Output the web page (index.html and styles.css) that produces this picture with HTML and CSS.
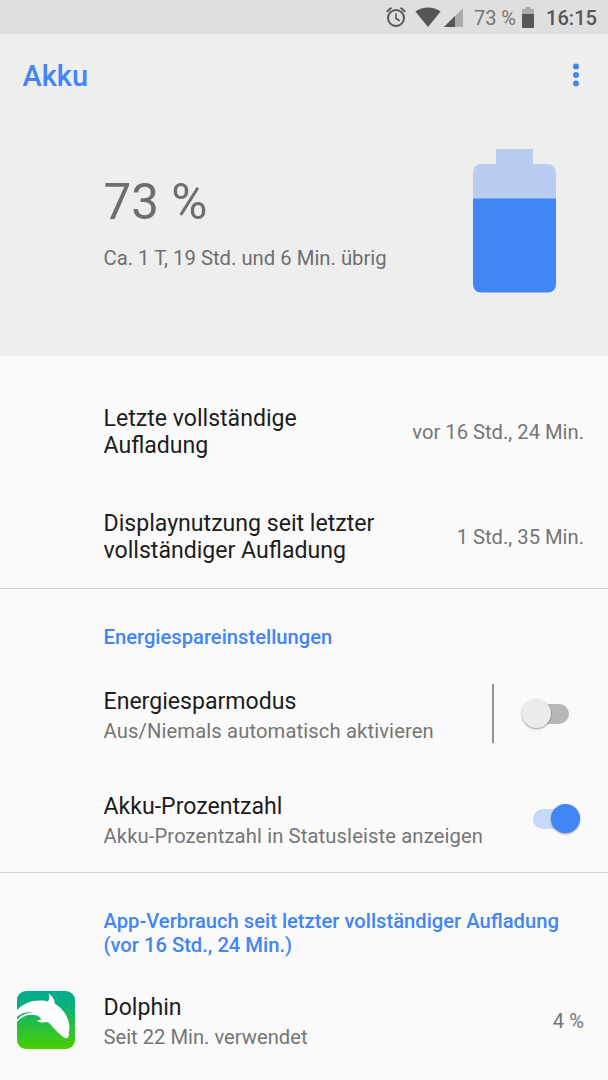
FILE: index.html
```html
<!DOCTYPE html>
<html lang="de">

<head>
  <meta charset="UTF-8">
  <meta name="viewport" content="width=device-width, initial-scale=1.0">
  <title>Akku</title>
  <link rel="stylesheet" href="styles.css">
</head>

<body>
  <div class="status-bar">
    <svg class="alarm" width="20" height="22" viewBox="0 0 20 22" fill="none" stroke="#565656">
      <circle cx="10" cy="12" r="8" stroke-width="2" />
      <path d="M10 7.3v5.2l3.6 2.2" stroke-width="1.6" />
      <path d="M.7 5.7L5.4 1.8M19.3 5.7L14.6 1.8" stroke-width="2" />
    </svg>
    <svg class="wifi" width="26" height="20" viewBox="0 0 26 20">
      <path d="M.4 4.6C7.6-1 18.400-1 25.600 4.600L13 20z" fill="#565656" />
    </svg>
    <svg class="signal" width="19" height="19" viewBox="0 0 19 19">
      <path d="M0 19L19 0v19z" fill="#ababab" />
      <path d="M0 19L11 8v11z" fill="#565656" />
    </svg>
    <span class="percent">73 %</span>
    <svg class="cell" width="12" height="21" viewBox="0 0 12 21">
      <path d="M3.500 0h5v2H12v6H0V2h3.500z" fill="#ababab" />
      <path d="M0 7h12v13a1 1 0 0 1-1 1H1a1 1 0 0 1-1-1z" fill="#565656" />
    </svg>
    <span class="clock">16:15</span>
  </div>

  <header class="header">
    <div class="toolbar">
      <h1>Akku</h1>
      <svg width="6" height="24" viewBox="0 0 6 24" fill="#4285f4">
        <circle cx="3" cy="3.500" r="3" />
        <circle cx="3" cy="12" r="3" />
        <circle cx="3" cy="20.500" r="3" />
      </svg>
    </div>
    <div class="summary">
      <div>
        <div class="level">73 %</div>
        <div class="remaining">Ca. 1 T, 19 Std. und 6 Min. übrig</div>
      </div>
      <svg class="battery" width="83" height="144" viewBox="0 0 83 144">
        <path d="M23 0h37v15h15a8 8 0 0 1 8 8v27H0V23a8 8 0 0 1 8-8h15z" fill="#b9cdf0" />
        <path d="M0 49.500h83V135.500a8 8 0 0 1-8 8H8a8 8 0 0 1-8-8z" fill="#4285f4" />
      </svg>
    </div>
  </header>

  <section class="group first">
    <div class="row">
      <div class="title">Letzte vollständige<br>Aufladung</div>
      <div class="value">vor 16 Std., 24 Min.</div>
    </div>
    <div class="row">
      <div class="title">Displaynutzung seit letzter<br>vollständiger Aufladung</div>
      <div class="value">1 Std., 35 Min.</div>
    </div>
  </section>

  <section class="group saver">
    <h2>Energiespareinstellungen</h2>
    <div class="row">
      <div class="text">
        <div class="title">Energiesparmodus</div>
        <div class="sub wide">Aus/Niemals automatisch aktivieren</div>
      </div>
      <div class="switch-box">
        <div class="switch"><span class="thumb"></span></div>
      </div>
    </div>
    <div class="row">
      <div class="text">
        <div class="title">Akku-Prozentzahl</div>
        <div class="sub wide">Akku-Prozentzahl in Statusleiste anzeigen</div>
      </div>
      <div class="switch on"><span class="thumb"></span></div>
    </div>
  </section>

  <section class="group apps">
    <h2>App-Verbrauch seit letzter vollständiger Aufladung<br>(vor 16 Std., 24 Min.)</h2>
    <div class="row app">
      <svg class="app-icon" width="58" height="58" viewBox="0 0 58 58">
        <defs>
          <linearGradient id="sea" x1="0" y1="0" x2="0" y2="1">
            <stop offset="0" stop-color="#00ab91" />
            <stop offset=".25" stop-color="#08b07c" />
            <stop offset=".6" stop-color="#28bf3d" />
            <stop offset="1" stop-color="#48cf00" />
          </linearGradient>
        </defs>
        <rect width="58" height="58" rx="9" fill="url(#sea)" />
        <path d="M0 19C7 12 15 9 24 9.500c3 0 5 .7 7 .9C32.500 8 32.500 5.500 31.500 2.500c4 2.500 6 5.500 6.300 10C45 17.500 50.500 24 52 32c.7 4 .5 6.500-.3 9.500.4 2.500 0 4.500-1.200 5.500-2.500.8-4.500-.8-6.500-2.700-5-4.300-8.500-8.800-12.500-12.800-4-.5-9 .8-11.500-1.800l4.500-1.200c-1-1.500-2-3-4.500-4C12.500 22.500 6 24.500 0 31v-2.500c4-4 9-6.800 15.500-6.700C10 20.500 4 22 0 26z" fill="#fff" />
      </svg>
      <div class="text">
        <div class="title">Dolphin</div>
        <div class="sub">Seit 22 Min. verwendet</div>
      </div>
      <div class="value">4 %</div>
    </div>
  </section>
</body>

</html>
```
FILE: styles.css
```css
* {
  box-sizing: border-box;
}

body {
  margin: 0;
  height: 1080px;
  overflow: hidden;
  font-family: Roboto, sans-serif;
  background-color: #fafafa;
  color: #1d1d1d;
}

svg {
  display: block;
  flex: none;
}

.status-bar {
  display: flex;
  align-items: center;
  justify-content: flex-end;
  height: 34px;
  padding-right: 11px;
  background-color: #dfdfdf;
  color: #565656;
  font-size: 20px;
  line-height: 34px;
}

.wifi {
  margin-left: 9px;
}

.signal {
  margin-left: 3px;
}

.percent {
  margin-left: 11px;
  padding-top: 2px;
  color: #757575;
}

.cell {
  margin-left: 6px;
}

.clock {
  margin-left: 12px;
  padding-top: 2px;
  font-size: 20.1px;
  font-weight: 500;
}

.header {
  height: 322px;
  background-color: #eee;
}

.toolbar {
  display: flex;
  align-items: center;
  justify-content: space-between;
  height: 81px;
  padding: 0 29px 0 22.5px;
}

h1 {
  margin: 2px 0 0;
  font-size: 29px;
  font-weight: 500;
  line-height: 34px;
  color: #4285f4;
}

.summary {
  display: flex;
  justify-content: space-between;
  padding: 34px 52px 0 103.5px;
  color: #6e6e6e;
}

.level {
  margin-top: 24px;
  font-size: 49.3px;
  line-height: 58px;
}

.remaining {
  margin-top: 15px;
  font-size: 20.3px;
  line-height: 24px;
}

.group + .group {
  border-top: 1px solid #d5d5d5;
}

.first {
  padding-top: 22px;
}

.saver {
  padding-bottom: 1px;
}

.row {
  display: flex;
  align-items: center;
  justify-content: space-between;
  height: 105px;
  padding: 0 24px 0 103.5px;
}

.first .title {
  padding-top: 3px;
}

.text {
  padding-top: 3px;
}

.title {
  font-size: 23.1px;
  line-height: 27px;
}

.sub {
  margin-top: 4px;
  font-size: 20.2px;
  line-height: 24px;
  color: #757575;
}

.wide {
  letter-spacing: 0.13px;
}

.value {
  padding-top: 2px;
  font-size: 20.2px;
  line-height: 24px;
  white-space: nowrap;
  color: #757575;
}

h2 {
  margin: 0;
  padding: 36px 0 12px 103.5px;
  font-size: 20.2px;
  font-weight: 500;
  line-height: 24px;
  color: #4285f4;
}

.apps h2 {
  padding-bottom: 10px;
}

.switch-box {
  display: flex;
  align-items: center;
  height: 59px;
  padding: 0 15px 0 33px;
  border-left: 2px solid #949494;
}

.switch {
  display: flex;
  align-items: center;
  width: 42px;
  height: 20px;
  border-radius: 10px;
  background-color: #b6b8b7;
}

.thumb {
  flex: none;
  width: 29px;
  height: 29px;
  margin-left: -5px;
  border-radius: 50%;
  background-color: #ececed;
  box-shadow: 0 1px 2px rgba(0, 0, 0, 0.4);
}

.switch.on {
  justify-content: flex-end;
  margin-right: 9px;
  background-color: #c6d9f7;
}

.on .thumb {
  margin: 0 -5px 0 0;
  background-color: #4285f4;
}

.app {
  padding-left: 17px;
}

.app-icon {
  margin-right: 28.5px;
}

.app .value {
  margin-left: auto;
}
```
